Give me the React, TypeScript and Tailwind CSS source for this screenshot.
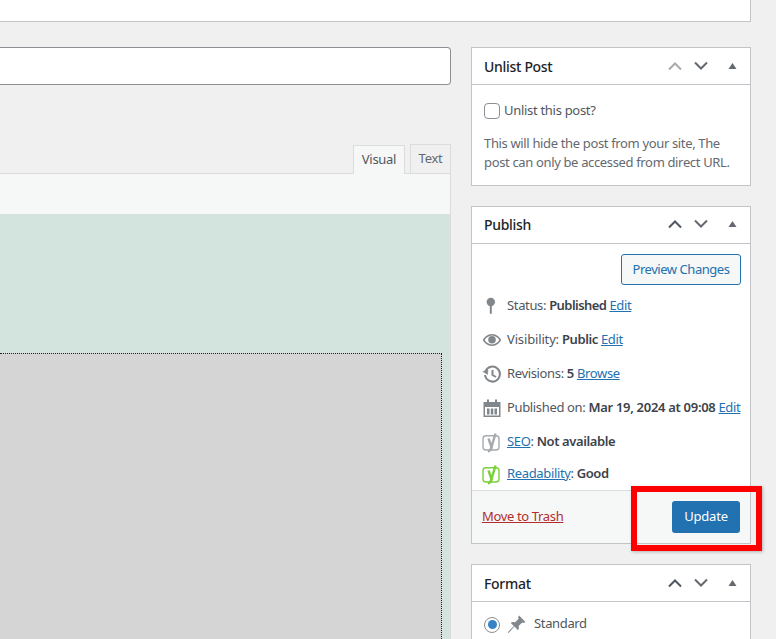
import React from "react";

const font = { fontFamily: '"Noto Sans", sans-serif' };

const Chevrons = ({ upClass = "text-[#50575e]" }: { upClass?: string }) => (
  <div className="flex items-center">
    <svg width="16" height="10" viewBox="0 0 16 10" className={`${upClass} mr-[10px]`} fill="none" stroke="currentColor" strokeWidth="2">
      <path d="M2 8.500 L8 2.500 L14 8.500" />
    </svg>
    <svg width="16" height="10" viewBox="0 0 16 10" className="text-[#646970] mr-[19px]" fill="none" stroke="currentColor" strokeWidth="2">
      <path d="M2 1.500 L8 7.500 L14 1.500" />
    </svg>
    <svg width="9" height="6" viewBox="0 0 9 6" className="text-[#646970] mr-[13px]" fill="currentColor">
      <path d="M0.500 6 L4.500 0 L8.500 6 Z" />
    </svg>
  </div>
);

const PanelHead = ({ title, upClass, className }: { title: string; upClass?: string; className?: string }) => (
  <div className={`h-[37px] flex items-center justify-between pl-[12px] border-b border-[#c3c4c7] ${className ?? ""}`}>
    <span className="text-[14px] font-medium text-[#1d2327] tracking-[-0.3px]">{title}</span>
    <Chevrons upClass={upClass} />
  </div>
);

const PinIcon = () => (
  <svg width="20" height="20" viewBox="0 0 20 20" fill="#82878c">
    <circle cx="8.800" cy="6" r="4.200" />
    <rect x="7.800" y="9" width="2" height="9" rx="1" />
  </svg>
);

const EyeIcon = () => (
  <svg width="20" height="20" viewBox="0 0 20 20" fill="#82878c">
    <path d="M10 4C5.500 4 2 7.500 0.800 10 2 12.500 5.500 16 10 16s8-3.500 9.200-6C18 7.500 14.500 4 10 4zm0 10.500C6.800 14.500 4 12.300 2.700 10 4 7.700 6.800 5.500 10 5.500s6 2.200 7.300 4.500c-1.300 2.300-4.100 4.500-7.300 4.500z" />
    <circle cx="10" cy="9.800" r="3.800" />
  </svg>
);

const HistoryIcon = () => (
  <svg width="20" height="20" viewBox="0 0 20 20" fill="none" stroke="#82878c" strokeWidth="2">
    <path d="M3.600 7A7.500 7.500 0 1 1 3 11" />
    <path d="M0.800 7.500 L5.500 10.500 L6 6 Z" fill="#82878c" strokeWidth="0.500" />
    <path d="M10.500 6 V11 L14 13" />
  </svg>
);

const CalendarIcon = () => (
  <svg width="20" height="20" viewBox="0 0 20 20" fill="#82878c">
    <path d="M1.500 4h17v15h-17V4zm1.500 5v8.500h14V9H3z" fillRule="evenodd" />
    <rect x="5" y="1.500" width="2" height="4" />
    <rect x="13" y="1.500" width="2" height="4" />
    <rect x="5" y="10.500" width="2.500" height="6" />
    <rect x="8.800" y="10.500" width="2.500" height="6" />
    <rect x="12.500" y="10.500" width="2.500" height="6" />
  </svg>
);

const YoastIcon = ({ color }: { color: string }) => (
  <svg width="19" height="21" viewBox="0 0 19 21" fill="none" className="-ml-[1px]">
    <rect x="2" y="3.700" width="16" height="14.300" rx="3" stroke={color} strokeWidth="1.400" />
    <path d="M7.500 6.500 L10.500 15 L14.500 1.500" stroke={color} strokeWidth="2.400" />
    <path d="M10.700 14.500 Q10 18.500 7 19.500" stroke={color} strokeWidth="2.400" />
  </svg>
);

const PublishRow = ({ icon, children, className }: { icon: React.ReactNode; children: React.ReactNode; className?: string }) => (
  <div className={`flex items-center h-[20px] pl-[10px] text-[13px] text-[#50575e] tracking-[-0.35px] whitespace-nowrap ${className ?? ""}`}>
    <span className="w-[25px] flex items-center shrink-0">{icon}</span>
    <span>{children}</span>
  </div>
);

const Link = ({ children }: { children: React.ReactNode }) => (
  <a className="text-[#2271b1] underline">{children}</a>
);

const Strong = ({ children, className = "tracking-[-0.4px]" }: { children: React.ReactNode; className?: string }) => (
  <b className={`font-semibold text-[#3c434a] ${className}`}>{children}</b>
);

export default function App() {
  return (
    <div style={font} className="relative h-[639px] w-[776px] overflow-hidden bg-[#f0f0f1]">
      {/* top box */}
      <div className="h-[22px] w-[751px] bg-white border-r border-b border-[#c3c4c7]" />

      <div className="flex gap-[20px] mt-[25px]">
        {/* editor column */}
        <div className="w-[451px] shrink-0 flex flex-col">
          <div className="h-[38px] bg-white border border-l-0 border-[#8c8f94] rounded-r-[4px]" />

          <div className="flex justify-end items-end h-[89px] mt-[-1px]">
            <div className="h-[29px] w-[52px] -mb-px z-10 bg-[#f6f7f7] border border-b-0 border-[#dcdcde] flex items-center justify-center text-[13px] text-[#50575e] tracking-[-0.3px]">
              Visual
            </div>
            <div className="h-[29px] w-[41px] ml-[5px] bg-[#f0f0f1] border border-b-0 border-[#dcdcde] flex items-center justify-center text-[13px] text-[#646970] tracking-[-0.3px]">
              Text
            </div>
          </div>

          <div className="border-r border-[#dcdcde]">
            <div className="h-[41px] bg-[#f6f7f7] border-t border-[#dcdcde]" />
            <div className="h-[139px] bg-[#d3e4de]" />
            <div className="bg-[#d3e4de] pr-[8px] h-[400px]">
              <div className="h-full bg-[#d5d5d5] border-t border-r border-dotted border-[#222]" />
            </div>
          </div>
        </div>

        {/* sidebar */}
        <div className="w-[280px] shrink-0 flex flex-col gap-[20px]">
          <div className="bg-white border border-[#c3c4c7] h-[139px]">
            <PanelHead title="Unlist Post" upClass="text-[#a7aaad]" />
            <div className="pl-[12px] pt-[16px]">
              <div className="flex items-center gap-[4px] h-[20px]">
                <span className="w-[16px] h-[16px] bg-white rounded-[4px] border border-[#8c8f94]" />
                <span className="text-[13px] text-[#50575e] tracking-[-0.3px]">Unlist this post?</span>
              </div>
              <p className="mt-[13px] text-[13px] leading-[19px] text-[#646970] tracking-[-0.35px] whitespace-nowrap">
                This will hide the post from your site, The
                <br />
                post can only be accessed from direct URL.
              </p>
            </div>
          </div>

          <div className="bg-white border border-[#c3c4c7] h-[338px] flex flex-col">
            <PanelHead title="Publish" className="pb-[2px]" />
            <div className="flex-1 flex flex-col">
              <div className="flex justify-end pt-[10px] pr-[9px]">
                <button className="h-[31px] w-[120px] border border-[#2271b1] rounded-[3px] bg-[#f6f7f7] text-[13px] text-[#2271b1] tracking-[-0.45px]">
                  Preview Changes
                </button>
              </div>
              <div className="flex flex-col gap-[14px] pt-[11px]">
                <PublishRow icon={<PinIcon />}>
                  Status: <Strong className="tracking-[-0.55px]">Published</Strong> <Link>Edit</Link>
                </PublishRow>
                <PublishRow icon={<EyeIcon />}>
                  <span className="tracking-[-0.15px]">Visibility:</span> <Strong>Public</Strong> <Link>Edit</Link>
                </PublishRow>
                <PublishRow icon={<HistoryIcon />}>
                  Revisions: <Strong>5</Strong> <Link>Browse</Link>
                </PublishRow>
                <PublishRow icon={<CalendarIcon />}>
                  Published on: <Strong className="tracking-[-0.3px]">Mar 19, 2024 at 09:08</Strong> <Link>Edit</Link>
                </PublishRow>
                <PublishRow icon={<YoastIcon color="#a7aaad" />}>
                  <Link>SEO</Link>: <Strong>Not available</Strong>
                </PublishRow>
                <PublishRow icon={<YoastIcon color="#7ad03a" />} className="-mt-[2px]">
                  <Link>Readability</Link>: <Strong>Good</Strong>
                </PublishRow>
              </div>
            </div>
            <div className="h-[53px] bg-[#f6f7f7] border-t border-[#dcdcde] flex items-center justify-between pl-[10px] pr-[10px]">
              <a className="text-[13px] text-[#b32d2e] underline tracking-[-0.35px]">Move to Trash</a>
              <button className="h-[32px] w-[68px] bg-[#2271b1] rounded-[3px] text-[13px] text-white tracking-[-0.2px]">
                Update
              </button>
            </div>
          </div>

          <div className="bg-white border border-[#c3c4c7] h-[120px]">
            <PanelHead title="Format" />
            <div className="flex items-center pl-[12px] pt-[12px]">
              <span className="w-[16px] h-[16px] rounded-full border border-[#8c8f94] bg-white flex items-center justify-center">
                <span className="w-[9px] h-[9px] rounded-full bg-[#3582c4]" />
              </span>
              <svg width="21" height="21" viewBox="0 0 20 20" fill="#82878c" className="ml-[6px] mr-[7px]">
                <path d="M12.500 1.500 L18.500 7.500 L17 8.500 L15.500 8 L12 11.500 C12.500 13 12.300 14.500 11.500 15.500 L8 12 L2.500 18 L1.800 17.300 L7.500 11.500 L4.500 8.500 C5.500 7.700 7 7.500 8.500 8 L12 4.500 L11.500 3 Z" />
              </svg>
              <span className="text-[13px] text-[#50575e] tracking-[-0.35px] mb-[2px]">Standard</span>
            </div>
          </div>
        </div>
      </div>

      {/* red highlight drawn over the screenshot */}
      <div className="absolute left-[631px] top-[486px] w-[131px] h-[65px] border-[6px] border-[#fe0000] shadow-[1px_1px_3px_rgba(0,0,0,0.25)]" />
    </div>
  );
}
